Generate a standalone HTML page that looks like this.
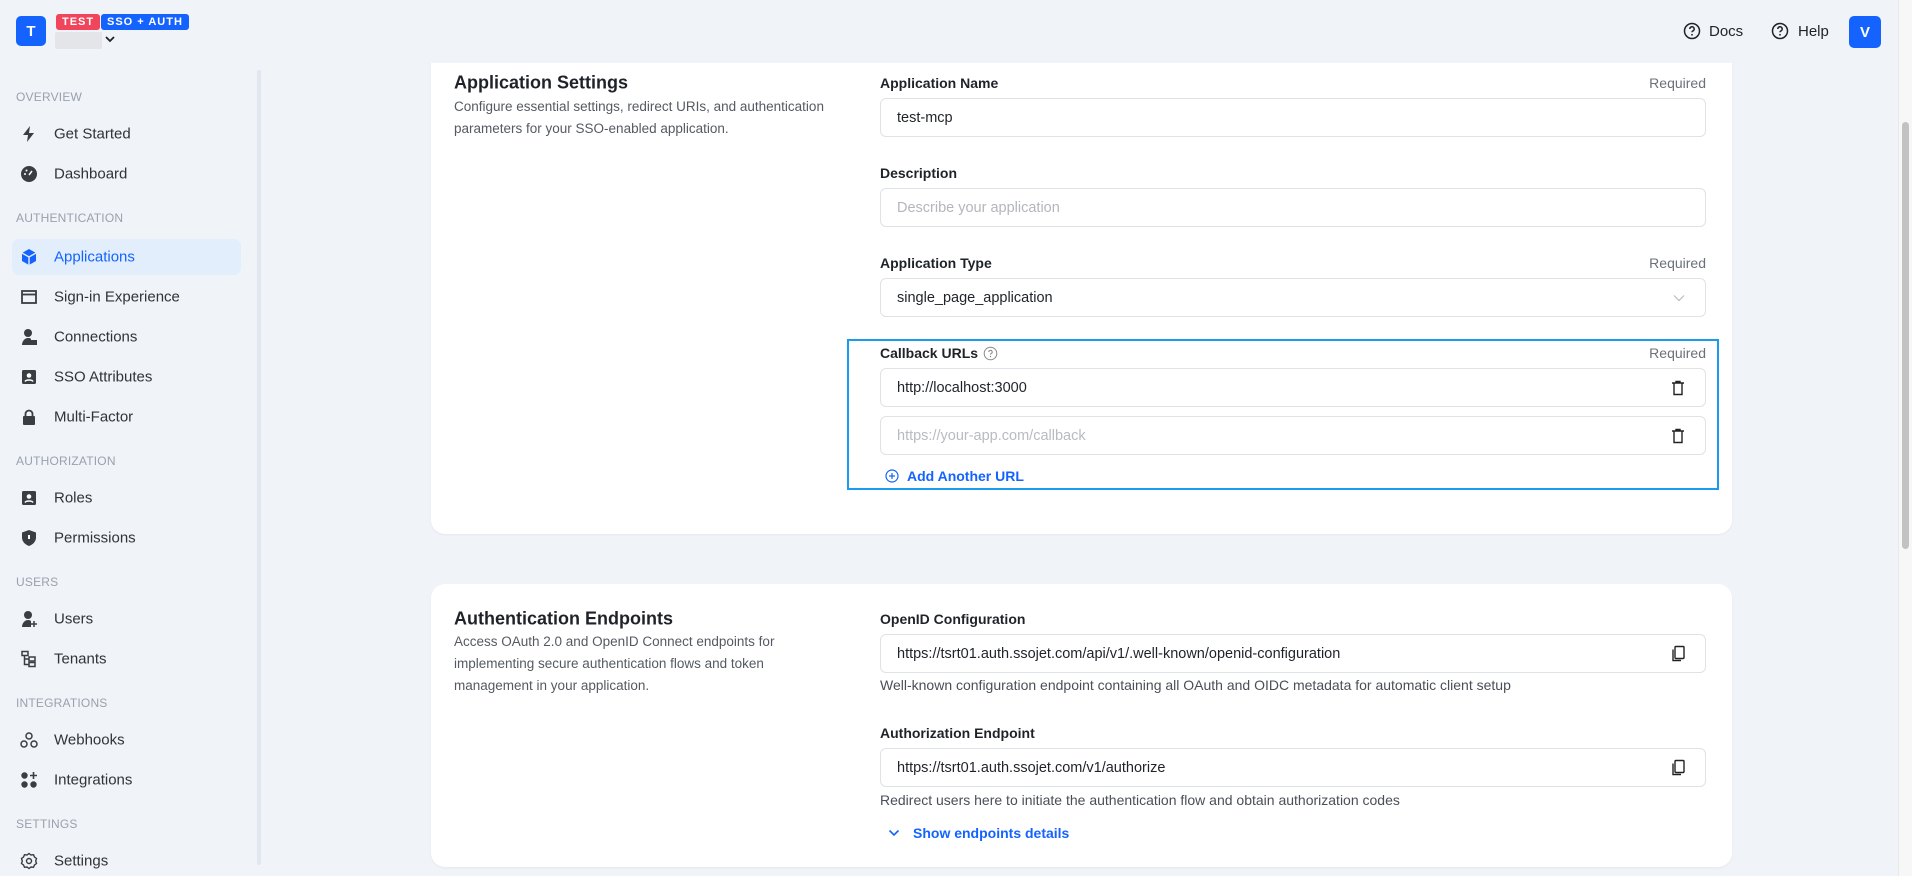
<!DOCTYPE html>
<html><head><style>
*{margin:0;padding:0;box-sizing:border-box}
body{width:1912px;height:876px;overflow:hidden;background:#f0f3f8;font-family:"Liberation Sans",sans-serif;color:#1f2329;position:relative}
.a{position:absolute}
.sec{position:absolute;left:16px;font-size:12px;color:#9aa1ac;letter-spacing:.2px}
.nav{position:absolute;left:54px;font-size:15px;color:#2f333a;transform:translateY(-50%)}
.ic{position:absolute;left:20px;width:18px;height:18px;transform:translateY(-50%)}
.card{position:absolute;left:431px;width:1301px;background:#fff;border-radius:14px;box-shadow:0 1px 2px rgba(0,0,0,.05)}
.lbl{position:absolute;left:880px;font-size:14px;font-weight:bold;color:#1f2329;transform:translateY(-50%)}
.req{position:absolute;right:206px;font-size:14px;color:#6b7079;transform:translateY(-50%)}
.inp{position:absolute;left:880px;width:826px;border:1px solid #dfe2e6;border-radius:6px;background:#fff;font-size:14.5px;padding-left:16px;display:flex;align-items:center;color:#1f2329}
.help{position:absolute;left:880px;font-size:14px;color:#4a4f57;transform:translateY(-50%)}
.ttl{position:absolute;left:454px;font-size:18px;font-weight:bold;transform:translateY(-50%)}
.desc{position:absolute;left:454px;font-size:13.5px;color:#555a62;line-height:22px;width:390px}
.ico-r{position:absolute;right:20px;top:50%;transform:translateY(-50%)}
</style></head><body>
<!-- card 1 -->
<div class="card" style="top:50px;height:484px"></div>
<div class="a" style="left:260px;top:0;width:1638px;height:63px;background:#f0f3f8"></div>

<!-- header -->
<div class="a" style="left:16px;top:16px;width:30px;height:30px;background:#1463ff;border-radius:5px;color:#fff;font-weight:bold;font-size:15px;display:flex;align-items:center;justify-content:center">T</div>
<div class="a" style="left:56px;top:14px;height:16px;padding:0 6px;background:#f1455b;border-radius:3px;color:#fff;font-size:11px;font-weight:bold;line-height:16px;letter-spacing:1px">TEST</div>
<div class="a" style="left:101px;top:14px;height:16px;padding:0 6px;background:#1463ff;border-radius:3px;color:#fff;font-size:11px;font-weight:bold;line-height:16px;letter-spacing:1px">SSO + AUTH</div>
<div class="a" style="left:55px;top:32px;width:47px;height:17px;background:#e3e5e9;border-radius:2px"></div>
<svg class="a" style="left:104px;top:35px" width="12" height="9" viewBox="0 0 12 9"><path d="M2 2l4 4 4-4" stroke="#222" stroke-width="1.8" fill="none"/></svg>

<svg class="a" style="left:1683px;top:22px" width="18" height="18" viewBox="0 0 18 18"><circle cx="9" cy="9" r="7.5" stroke="#222" stroke-width="1.5" fill="none"/><path d="M6.8 7a2.2 2.2 0 1 1 3 2c-.6.3-.8.7-.8 1.3" stroke="#222" stroke-width="1.5" fill="none"/><circle cx="9" cy="12.8" r=".9" fill="#222"/></svg>
<div class="a" style="left:1709px;top:23px;font-size:15px">Docs</div>
<svg class="a" style="left:1771px;top:22px" width="18" height="18" viewBox="0 0 18 18"><circle cx="9" cy="9" r="7.5" stroke="#222" stroke-width="1.5" fill="none"/><path d="M6.8 7a2.2 2.2 0 1 1 3 2c-.6.3-.8.7-.8 1.3" stroke="#222" stroke-width="1.5" fill="none"/><circle cx="9" cy="12.8" r=".9" fill="#222"/></svg>
<div class="a" style="left:1798px;top:23px;font-size:15px">Help</div>
<div class="a" style="left:1849px;top:16px;width:32px;height:32px;background:#1463ff;border-radius:5px;color:#fff;font-weight:bold;font-size:15px;display:flex;align-items:center;justify-content:center">V</div>
<!-- page scrollbar -->
<div class="a" style="left:1898px;top:0;width:14px;height:876px;background:#f7f7f7;border-left:1px solid #e8e8e8"></div>
<div class="a" style="left:1902px;top:122px;width:7px;height:427px;background:#c2c2c2;border-radius:4px"></div>
<!-- sidebar -->
<div class="a" style="left:257px;top:70px;width:4px;height:795px;background:#e2e7ef;border-radius:2px"></div>
<div class="sec" style="top:90px">OVERVIEW</div>
<svg class="ic" style="top:134px" viewBox="0 0 18 18"><path d="M10 1L3 10h5l-1 7 7-9H9z" fill="#3a3d42"/></svg>
<div class="nav" style="top:134px">Get Started</div>
<svg class="ic" style="top:174px" viewBox="0 0 18 18"><circle cx="9" cy="9" r="8" fill="#3a3d42"/><path d="M9 10l3-4" stroke="#fff" stroke-width="1.5"/><circle cx="5" cy="9" r="1" fill="#fff"/><circle cx="6.5" cy="5.5" r="1" fill="#fff"/></svg>
<div class="nav" style="top:174px">Dashboard</div>
<div class="sec" style="top:211px">AUTHENTICATION</div>
<div class="a" style="left:12px;top:239px;width:229px;height:36px;background:#e3eefc;border-radius:7px"></div>
<svg class="ic" style="top:257px" viewBox="0 0 18 18"><path d="M9 1l7 4v8l-7 4-7-4V5z" fill="#1463ff"/><path d="M2 5l7 4 7-4M9 9v8" stroke="#e3eefc" stroke-width="1.4" fill="none"/></svg>
<div class="nav" style="top:257px;color:#1463ff">Applications</div>
<svg class="ic" style="top:297px" viewBox="0 0 18 18"><rect x="2" y="3" width="14" height="12" stroke="#3a3d42" stroke-width="1.8" fill="none"/><path d="M2 6.5h14" stroke="#3a3d42" stroke-width="1.8"/></svg>
<div class="nav" style="top:297px">Sign-in Experience</div>
<svg class="ic" style="top:337px" viewBox="0 0 18 18"><circle cx="8" cy="5" r="4" fill="#3a3d42"/><path d="M2 17c0-4 3-7 6-7s3 1 3 1v6z" fill="#3a3d42"/><rect x="11" y="12" width="6" height="5" fill="#3a3d42"/></svg>
<div class="nav" style="top:337px">Connections</div>
<svg class="ic" style="top:377px" viewBox="0 0 18 18"><rect x="2" y="2" width="14" height="14" rx="1.5" fill="#3a3d42"/><circle cx="9" cy="7.5" r="2.3" fill="#fff"/><path d="M5 13.5c1-2 7-2 8 0" stroke="#fff" stroke-width="1.5" fill="none"/></svg>
<div class="nav" style="top:377px">SSO Attributes</div>
<svg class="ic" style="top:417px" viewBox="0 0 18 18"><rect x="3" y="8" width="12" height="9" rx="1" fill="#3a3d42"/><path d="M5.5 8V6a3.5 3.5 0 0 1 7 0v2" stroke="#3a3d42" stroke-width="1.8" fill="none"/></svg>
<div class="nav" style="top:417px">Multi-Factor</div>
<div class="sec" style="top:454px">AUTHORIZATION</div>
<svg class="ic" style="top:498px" viewBox="0 0 18 18"><rect x="2" y="2" width="14" height="14" rx="1.5" fill="#3a3d42"/><circle cx="9" cy="7.5" r="2.3" fill="#fff"/><path d="M5 13.5c1-2 7-2 8 0" stroke="#fff" stroke-width="1.5" fill="none"/></svg>
<div class="nav" style="top:498px">Roles</div>
<svg class="ic" style="top:538px" viewBox="0 0 18 18"><path d="M9 1l7 2.5v5c0 4-3 7-7 8.5C5 15.5 2 12.5 2 8.5v-5z" fill="#3a3d42"/><rect x="8" y="6" width="2" height="4" fill="#fff"/></svg>
<div class="nav" style="top:538px">Permissions</div>
<div class="sec" style="top:575px">USERS</div>
<svg class="ic" style="top:619px" viewBox="0 0 18 18"><circle cx="8" cy="5" r="4" fill="#3a3d42"/><path d="M2 17c0-4 3-7 6-7 2 0 3 1 3 1v6z" fill="#3a3d42"/><path d="M14 11v6M11 14h6" stroke="#3a3d42" stroke-width="1.5"/></svg>
<div class="nav" style="top:619px">Users</div>
<svg class="ic" style="top:659px" viewBox="0 0 18 18"><rect x="2" y="1.5" width="6" height="4" stroke="#3a3d42" stroke-width="1.5" fill="none"/><rect x="9" y="7" width="6" height="4" stroke="#3a3d42" stroke-width="1.5" fill="none"/><rect x="9" y="12.5" width="6" height="4" stroke="#3a3d42" stroke-width="1.5" fill="none"/><path d="M4.5 5.5v9H9M4.5 9H9" stroke="#3a3d42" stroke-width="1.5" fill="none"/></svg>
<div class="nav" style="top:659px">Tenants</div>
<div class="sec" style="top:696px">INTEGRATIONS</div>
<svg class="ic" style="top:740px" viewBox="0 0 18 18"><circle cx="9" cy="5" r="3" stroke="#3a3d42" stroke-width="1.5" fill="none"/><circle cx="4" cy="13" r="3" stroke="#3a3d42" stroke-width="1.5" fill="none"/><circle cx="14" cy="13" r="3" stroke="#3a3d42" stroke-width="1.5" fill="none"/></svg>
<div class="nav" style="top:740px">Webhooks</div>
<svg class="ic" style="top:780px" viewBox="0 0 18 18"><circle cx="4.5" cy="4.5" r="3.2" fill="#3a3d42"/><circle cx="4.5" cy="13.5" r="3.2" fill="#3a3d42"/><circle cx="13.5" cy="13.5" r="3.2" fill="#3a3d42"/><path d="M13.5 1v7M10 4.5h7" stroke="#3a3d42" stroke-width="1.6"/></svg>
<div class="nav" style="top:780px">Integrations</div>
<div class="sec" style="top:817px">SETTINGS</div>
<svg class="ic" style="top:861px" viewBox="0 0 18 18"><path d="M9 1.5l2 1.5 2.5-.3 1 2.3 2 1.5-.8 2.5.8 2.5-2 1.5-1 2.3-2.5-.3-2 1.5-2-1.5-2.5.3-1-2.3-2-1.5.8-2.5-.8-2.5 2-1.5 1-2.3 2.5.3z" stroke="#3a3d42" stroke-width="1.4" fill="none"/><circle cx="9" cy="9" r="2.5" stroke="#3a3d42" stroke-width="1.4" fill="none"/></svg>
<div class="nav" style="top:861px">Settings</div>

<div class="ttl" style="top:83px">Application Settings</div>
<div class="desc" style="top:96px">Configure essential settings, redirect URIs, and authentication parameters for your SSO-enabled application.</div>
<div class="lbl" style="top:83px">Application Name</div><div class="req" style="top:83px">Required</div>
<div class="inp" style="top:98px;height:39px">test-mcp</div>
<div class="lbl" style="top:173px">Description</div>
<div class="inp" style="top:188px;height:39px;color:#b3b6bb">Describe your application</div>
<div class="lbl" style="top:263px">Application Type</div><div class="req" style="top:263px">Required</div>
<div class="inp" style="top:278px;height:39px">single_page_application<svg class="ico-r" width="12" height="8" viewBox="0 0 12 8"><path d="M1 1.5l5 5 5-5" stroke="#b8bbc0" stroke-width="1.2" fill="none"/></svg></div>
<div class="a" style="left:847px;top:339px;width:872px;height:151px;border:2px solid #1a9bf0"></div>
<div class="lbl" style="top:353px">Callback URLs</div>
<svg class="a" style="left:983px;top:346px" width="15" height="15" viewBox="0 0 15 15"><circle cx="7.5" cy="7.5" r="6.3" stroke="#888" stroke-width="1" fill="none"/><path d="M5.8 6a1.7 1.7 0 1 1 2.3 1.6c-.5.2-.6.5-.6 1" stroke="#888" stroke-width="1" fill="none"/><circle cx="7.5" cy="10.5" r=".7" fill="#888"/></svg>
<div class="req" style="top:353px">Required</div>
<div class="inp" style="top:368px;height:39px">http://localhost:3000<svg class="ico-r" width="14" height="16" viewBox="0 0 14 16"><path d="M1 3h12M5 3V1.5h4V3M3 3v11.5h8V3" stroke="#222" stroke-width="1.4" fill="none"/></svg></div>
<div class="inp" style="top:416px;height:39px;color:#b8bbc0">https://your-app.com/callback<svg class="ico-r" width="14" height="16" viewBox="0 0 14 16"><path d="M1 3h12M5 3V1.5h4V3M3 3v11.5h8V3" stroke="#222" stroke-width="1.4" fill="none"/></svg></div>
<svg class="a" style="left:885px;top:469px" width="14" height="14" viewBox="0 0 14 14"><circle cx="7" cy="7" r="6" stroke="#1463ff" stroke-width="1.2" fill="none"/><path d="M7 4v6M4 7h6" stroke="#1463ff" stroke-width="1.2"/></svg>
<div class="a" style="left:907px;top:468px;font-size:14px;font-weight:bold;color:#1463ff">Add Another URL</div>

<!-- card 2 -->
<div class="card" style="top:584px;height:283px"></div>
<div class="ttl" style="top:619px">Authentication Endpoints</div>
<div class="desc" style="top:631px">Access OAuth 2.0 and OpenID Connect endpoints for implementing secure authentication flows and token management in your application.</div>
<div class="lbl" style="top:619px">OpenID Configuration</div>
<div class="inp" style="top:634px;height:39px">https://tsrt01.auth.ssojet.com/api/v1/.well-known/openid-configuration<svg class="ico-r" width="14" height="17" viewBox="0 0 14 17"><rect x="4" y="1" width="9" height="12" rx="1" stroke="#222" stroke-width="1.4" fill="none"/><path d="M2 4v11h8" stroke="#222" stroke-width="1.4" fill="none"/></svg></div>
<div class="help" style="top:685px">Well-known configuration endpoint containing all OAuth and OIDC metadata for automatic client setup</div>
<div class="lbl" style="top:733px">Authorization Endpoint</div>
<div class="inp" style="top:748px;height:39px">https://tsrt01.auth.ssojet.com/v1/authorize<svg class="ico-r" width="14" height="17" viewBox="0 0 14 17"><rect x="4" y="1" width="9" height="12" rx="1" stroke="#222" stroke-width="1.4" fill="none"/><path d="M2 4v11h8" stroke="#222" stroke-width="1.4" fill="none"/></svg></div>
<div class="help" style="top:800px">Redirect users here to initiate the authentication flow and obtain authorization codes</div>
<svg class="a" style="left:888px;top:829px" width="12" height="8" viewBox="0 0 12 8"><path d="M1.5 1.5l4.5 4.5 4.5-4.5" stroke="#1463ff" stroke-width="1.6" fill="none"/></svg>
<div class="a" style="left:913px;top:825px;font-size:14px;font-weight:bold;color:#1463ff">Show endpoints details</div>
</body></html>
